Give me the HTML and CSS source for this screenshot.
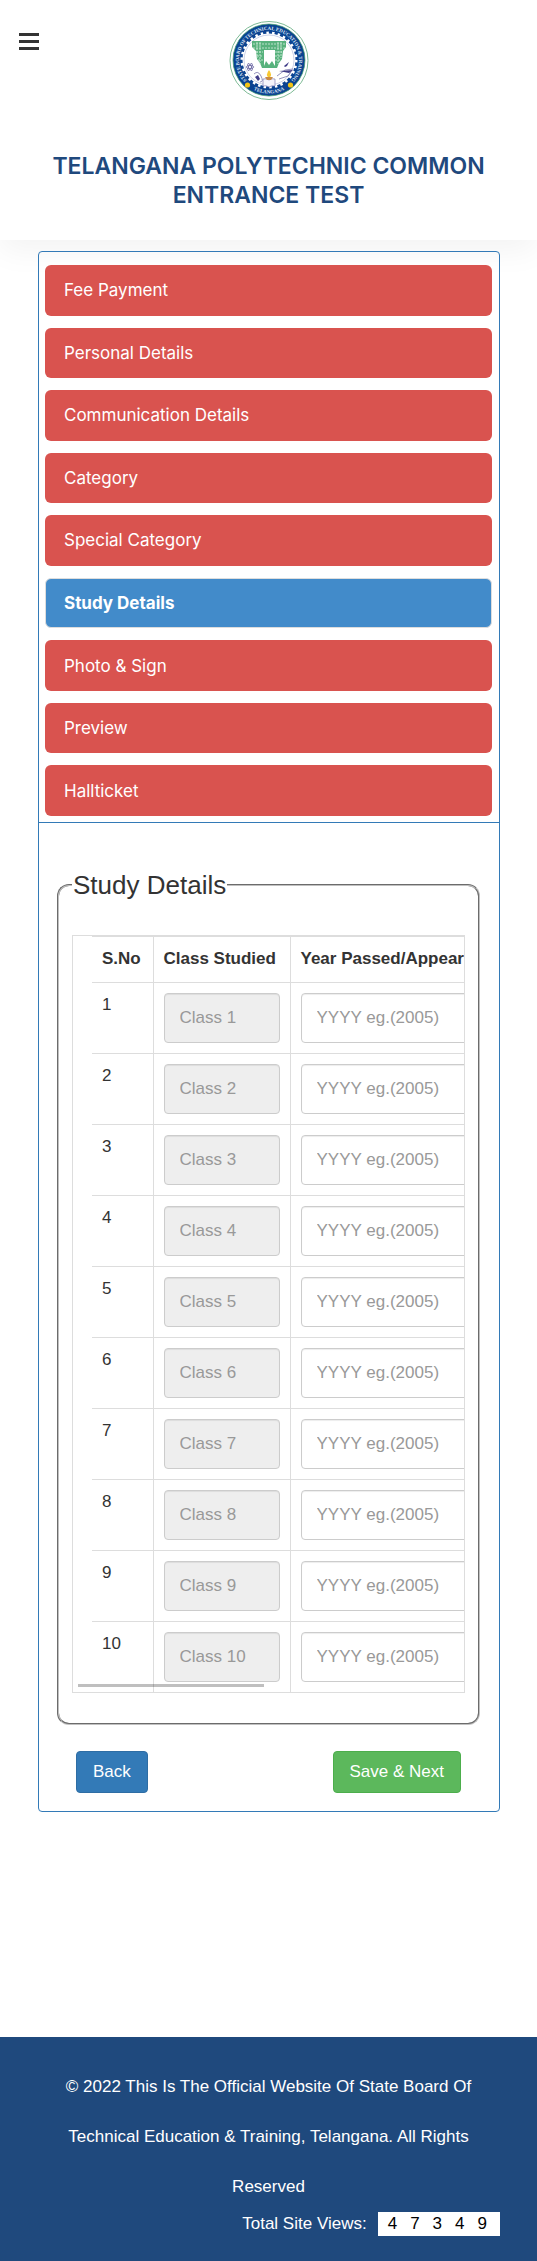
FILE: index.html
```html
<!DOCTYPE html>
<html lang="en">
<head>
<meta charset="utf-8">
<meta name="viewport" content="width=device-width, initial-scale=1">
<title>Telangana Polytechnic Common Entrance Test</title>
<link rel="stylesheet" href="styles.css">
</head>
<body>
<header class="site-header">
  <div class="header-bar">
    <button class="menu-button" type="button" aria-label="Open menu">
      <svg width="20" height="17" viewBox="0 0 20 17" aria-hidden="true"><path d="M0 0h20v3H0zM0 7h20v3H0zM0 14h20v3H0z" fill="#333"/></svg>
    </button>
    <svg class="logo" viewBox="0 0 80 80" role="img" aria-label="State Board of Technical Education and Training, Telangana">
      <defs>
        <path id="ring-top" d="M18.800 61.200A30 30 0 1 1 61.200 61.200"/>
        <path id="ring-bottom" d="M20 67A34 34 0 0 0 60 67"/>
      </defs>
      <circle cx="40" cy="40.500" r="39" fill="#fff" stroke="#7dbb95" stroke-width="1"/>
      <circle cx="40" cy="40" r="36" fill="#0b4391" stroke="#3c9a6a" stroke-width=".7"/>
      <circle cx="40" cy="40" r="26.500" fill="#fff"/>
      <circle cx="40" cy="40" r="27.200" fill="none" stroke="#fff" stroke-width="2.600" stroke-dasharray="2.500 3.197"/>
      <circle cx="40" cy="40" r="25" fill="none" stroke="#a9b3d6" stroke-width=".6"/>
      <text class="seal-text"><textPath href="#ring-top" startOffset="50%" text-anchor="middle">STATE BOARD OF TECHNICAL EDUCATION &amp; TRAINING</textPath></text>
      <text class="seal-text"><textPath href="#ring-bottom" startOffset="50%" text-anchor="middle">TELANGANA</textPath></text>
      <path d="M23 21h34v6l-3 4-1 8-3 4-2 5H33l-2-5-3-4-1-8-4-4z" fill="#58b27d"/>
      <path d="M24 24h32M24 28h32M27 32h7M46 32h7M28 36h6M46 36h6M29 40h5M46 40h5M28 22v16M31 22v22M49 22v22M52 22v16" stroke="#d5eee0" stroke-width=".8" stroke-dasharray="2 1" fill="none"/>
      <path d="M35 46V30h11v16l-3-5-3 4-3-4z" fill="#fff"/>
      <g fill="none" stroke="#4e4a91" stroke-width=".6"><ellipse cx="21" cy="47" rx="4" ry="1.500"/><ellipse cx="21" cy="47" rx="4" ry="1.500" transform="rotate(60 21 47)"/><ellipse cx="21" cy="47" rx="4" ry="1.500" transform="rotate(120 21 47)"/><path d="M25 54q4-4 7 2t-1 6M48 56l8-6 8-1M50 59l9-3 4-6"/></g>
      <path d="M55 46l5-4-2 4-2 1zM26 57l3-2 2 4-2 2zM50 51l14-1-4 3z" fill="#403c87"/>
      <path d="M34 59q3-1 6 1 3-2 6-1v7q-3-1-6 1-3-2-6-1z" fill="#f5f4fb" stroke="#6f6ca9" stroke-width=".6"/>
      <path d="M40 50q4 5 0 8-4-3 0-8" fill="#f8c831"/><path d="M36 57h8l-2 3h-4z" fill="#c98a45"/>
      <circle cx="18.500" cy="65" r="2.600" fill="#f3c315"/><circle cx="61.500" cy="65" r="2.600" fill="#f3c315"/>
    </svg>
  </div>
  <h1 class="site-title">TELANGANA POLYTECHNIC COMMON ENTRANCE TEST</h1>
</header>

<main class="panel">
  <nav class="steps" aria-label="Application steps">
    <a class="step" href="#fee">Fee Payment</a>
    <a class="step" href="#personal">Personal Details</a>
    <a class="step" href="#communication">Communication Details</a>
    <a class="step" href="#category">Category</a>
    <a class="step" href="#special">Special Category</a>
    <a class="step step-active" href="#study" aria-current="step">Study Details</a>
    <a class="step" href="#photo">Photo &amp; Sign</a>
    <a class="step" href="#preview">Preview</a>
    <a class="step" href="#hallticket">Hallticket</a>
  </nav>
  <form class="study-form" id="study">
    <fieldset class="study-fieldset">
      <legend>Study Details</legend>
      <div class="table-frame">
        <div class="table-scroll">
          <table class="study-table">
            <thead><tr><th scope="col">S.No</th><th scope="col">Class Studied</th><th scope="col">Year Passed/Appeared</th></tr></thead>
            <tbody id="study-rows"></tbody>
          </table>
        </div>
        <div class="scroll-thumb"></div>
      </div>
    </fieldset>
    <div class="actions">
      <button class="btn btn-back" type="button">Back</button>
      <button class="btn btn-next" type="submit">Save &amp; Next</button>
    </div>
  </form>
</main>

<footer class="site-footer">
  <p class="copyright">© 2022 This Is The Official Website Of State Board Of Technical Education &amp; Training, Telangana. All Rights Reserved</p>
  <div class="views"><span>Total Site Views:</span><span class="counter"><span>4</span><span>7</span><span>3</span><span>4</span><span>9</span></span></div>
</footer>
<script src="rows.js"></script>
</body>
</html>
```

FILE: styles.css
```css
* { box-sizing: border-box; }
body { margin: 0; min-height: 100vh; display: flex; flex-direction: column; background: #fff; color: #333; font-family: "Liberation Sans", Arial, sans-serif; font-size: 17px; line-height: 24px; }
.site-header { padding: 20px 19px 30px; background: #fff; box-shadow: 0 10px 30px rgba(0, 0, 0, .05); }
.header-bar { display: grid; grid-template-columns: 1fr auto 1fr; align-items: start; }
.menu-button { justify-self: start; margin: 13px 0 0; padding: 0; border: 0; background: none; line-height: 0; }
.logo { width: 80px; height: 80px; }
.seal-text { font: bold 5px "Liberation Serif", serif; fill: #dfe7f5; }
.site-title { margin: 52px 0 0; color: #1f497d; text-align: center; font: 600 23px/29px Inter, sans-serif; }
.panel { position: relative; margin: 11px 37px 0 38px; border: 1px solid #337ab7; border-radius: 4px; }
.steps { display: grid; grid-auto-rows: 1fr; gap: 12px; min-height: 571px; padding: 13px 7px 6px 6px; border-bottom: 1px solid #337ab7; }
.step { display: flex; align-items: center; padding: 0 19px; border-radius: 6px; background: #d9534f; color: #fff; font-family: Inter, sans-serif; font-size: 17px; text-decoration: none; }
.step-active { background: #428bca; border: 1px solid #ddd; padding: 0 18px; font-weight: 700; }
.study-form { padding: 47px 19px 18px 18px; }
.study-fieldset { min-width: 0; margin: 0; padding: 35px 13px 30px; border: 2px groove #c0c0c0; border-radius: 12px; }
.study-fieldset legend { padding: 0 1px; font-size: 26px; line-height: 30px; }
.table-frame { position: relative; border: 1px solid #ddd; }
.table-scroll { padding-left: 19px; overflow-x: auto; scrollbar-width: none; }
.study-table { border-collapse: collapse; white-space: nowrap; }
.study-table th, .study-table td { padding: 10px; border: 1px solid #ddd; text-align: left; vertical-align: top; }
.study-table th:first-child, .study-table td:first-child { min-width: 61px; border-left: 0; }
.study-table tbody tr:last-child td { border-bottom: 0; }
.study-table th { height: 46px; }
.field { display: block; width: 116px; height: 50px; padding: 6px 15px; border: 1px solid #ccc; border-radius: 4px; background: #fff; box-shadow: inset 0 1px 1px rgba(0, 0, 0, .075); font: inherit; }
.field::placeholder { color: #999; opacity: 1; }
.field:disabled { background: #eee; }
.field-year { width: 200px; }
.scroll-thumb { position: absolute; left: 5px; bottom: 5px; width: 186px; height: 3px; background: rgba(0, 0, 0, .25); }
.actions { display: flex; justify-content: space-between; padding: 26px 19px 0; }
.btn { height: 42px; padding: 0 16px; border: 1px solid; border-radius: 4px; color: #fff; font: inherit; }
.btn-back { background: #337ab7; border-color: #2e6da4; }
.btn-next { background: #5cb85c; border-color: #4cae4c; }
.site-footer { margin-top: auto; padding: 25px 37px; background: #1f497d; color: #fff; }
.copyright { margin: 0; padding: 0 10px; text-align: center; line-height: 50px; }
.views { display: flex; justify-content: flex-end; align-items: center; gap: 11px; }
.counter { display: flex; gap: 13px; padding: 0 13px 0 10px; background: #fff; color: #000; }
```

FILE: rows.js
```javascript
const body = document.getElementById("study-rows");
for (let i = 1; i <= 10; i++) {
  const row = body.insertRow();
  row.innerHTML = `<td>${i}</td>
    <td><input class="field" type="text" placeholder="Class ${i}" aria-label="Class ${i}" disabled></td>
    <td><input class="field field-year" type="text" placeholder="YYYY eg.(2005)" aria-label="Year passed, row ${i}"></td>`;
}
```
